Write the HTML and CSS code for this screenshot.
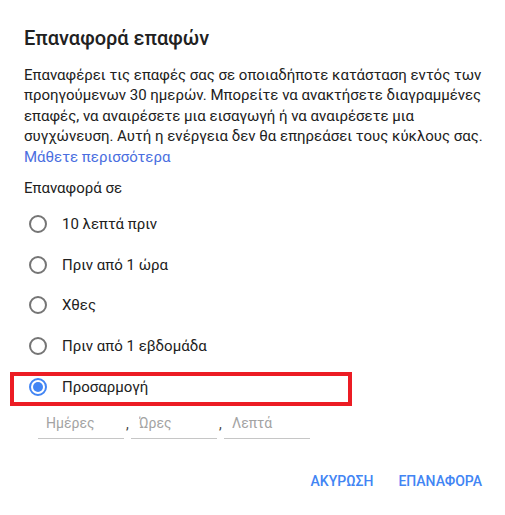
FILE: index.html
```html
<!DOCTYPE html>
<html lang="el">
<head>
<meta charset="utf-8">
<title>Επαναφορά επαφών</title>
<link rel="stylesheet" href="styles.css">
</head>
<body>
<div class="dialog">
  <h1 class="title">Επαναφορά επαφών</h1>
  <p class="desc">Επαναφέρει τις επαφές σας σε οποιαδήποτε κατάσταση εντός των προηγούμενων 30 ημερών. Μπορείτε να ανακτήσετε διαγραμμένες επαφές, να αναιρέσετε μια εισαγωγή ή να αναιρέσετε μια συγχώνευση. Αυτή η ενέργεια δεν θα επηρεάσει τους κύκλους σας. <a class="link" href="#">Μάθετε περισσότερα</a></p>
  <div class="label">Επαναφορά σε</div>
  <div class="options">
    <div class="option"><span class="radio"></span><span class="opt-text">10 λεπτά πριν</span></div>
    <div class="option"><span class="radio"></span><span class="opt-text">Πριν από 1 ώρα</span></div>
    <div class="option"><span class="radio"></span><span class="opt-text">Χθες</span></div>
    <div class="option"><span class="radio"></span><span class="opt-text">Πριν από 1 εβδομάδα</span></div>
    <div class="option custom"><span class="radio checked"></span><span class="opt-text">Προσαρμογή</span><span class="highlight"></span></div>
  </div>
  <div class="fields">
    <input class="field" type="text" placeholder="Ημέρες">
    <span class="comma">,</span>
    <input class="field" type="text" placeholder="Ώρες">
    <span class="comma">,</span>
    <input class="field" type="text" placeholder="Λεπτά">
  </div>
  <div class="actions">
    <button class="btn">ΑΚΥΡΩΣΗ</button>
    <button class="btn">ΕΠΑΝΑΦΟΡΑ</button>
  </div>
</div>
</body>
</html>
```
FILE: styles.css
```css
html, body {
  margin: 0;
  padding: 0;
  background: #ffffff;
}
body {
  font-family: Roboto, "Liberation Sans", sans-serif;
  color: #212121;
}
.dialog {
  width: 505px;
  height: 515px;
  box-sizing: border-box;
  padding: 26px 15px 0 24px;
}
.title {
  margin: 0;
  font-size: 20px;
  line-height: 24px;
  font-weight: 500;
  color: #212121;
}
.desc {
  margin: 14.6px 0 0 0;
  font-size: 15px;
  line-height: 20.5px;
  color: #212121;
  width: 466px;
}
.link {
  color: #4a6ee0;
  text-decoration: none;
}
.label {
  margin-top: 10.8px;
  font-size: 15px;
  line-height: 20px;
}
.options {
  margin-top: 5.6px;
  display: flex;
  flex-direction: column;
}
.option {
  position: relative;
  height: 40.8px;
  display: flex;
  align-items: center;
  padding-left: 5px;
  gap: 15px;
  font-size: 15px;
  line-height: 20px;
}
.radio {
  width: 18px;
  height: 18px;
  box-sizing: border-box;
  border: 2px solid #757575;
  border-radius: 50%;
  flex: none;
  position: relative;
}
.radio.checked {
  border-color: #4285f4;
}
.radio.checked::after {
  content: "";
  position: absolute;
  left: 2px;
  top: 2px;
  width: 10px;
  height: 10px;
  border-radius: 50%;
  background: #4285f4;
}
.highlight {
  position: absolute;
  left: -14px;
  top: 5.5px;
  width: 342px;
  height: 34px;
  box-sizing: border-box;
  border: 4px solid #ec1c24;
  pointer-events: none;
}
.fields {
  display: flex;
  align-items: flex-end;
  margin: 4px 0 0 14px;
  gap: 0;
}
.field {
  width: 86px;
  height: 28px;
  box-sizing: border-box;
  border: none;
  border-bottom: 1px solid #c6c6c6;
  padding: 0 0 4px 8px;
  margin: 0;
  font-family: Roboto, "Liberation Sans", sans-serif;
  font-size: 14px;
  color: #212121;
  background: transparent;
  outline: none;
}
.field::placeholder {
  color: #a3a3a3;
}
.comma {
  width: 7px;
  font-size: 14px;
  line-height: 20px;
  padding-bottom: 5px;
  color: #424242;
  text-align: center;
}
.actions {
  display: flex;
  justify-content: flex-end;
  gap: 9px;
  margin-top: 24px;
}
.btn {
  height: 36px;
  padding: 0 8px;
  border: none;
  background: transparent;
  font-family: Roboto, "Liberation Sans", sans-serif;
  font-size: 14px;
  font-weight: 500;
  color: #4285f4;
  cursor: pointer;
}
```
